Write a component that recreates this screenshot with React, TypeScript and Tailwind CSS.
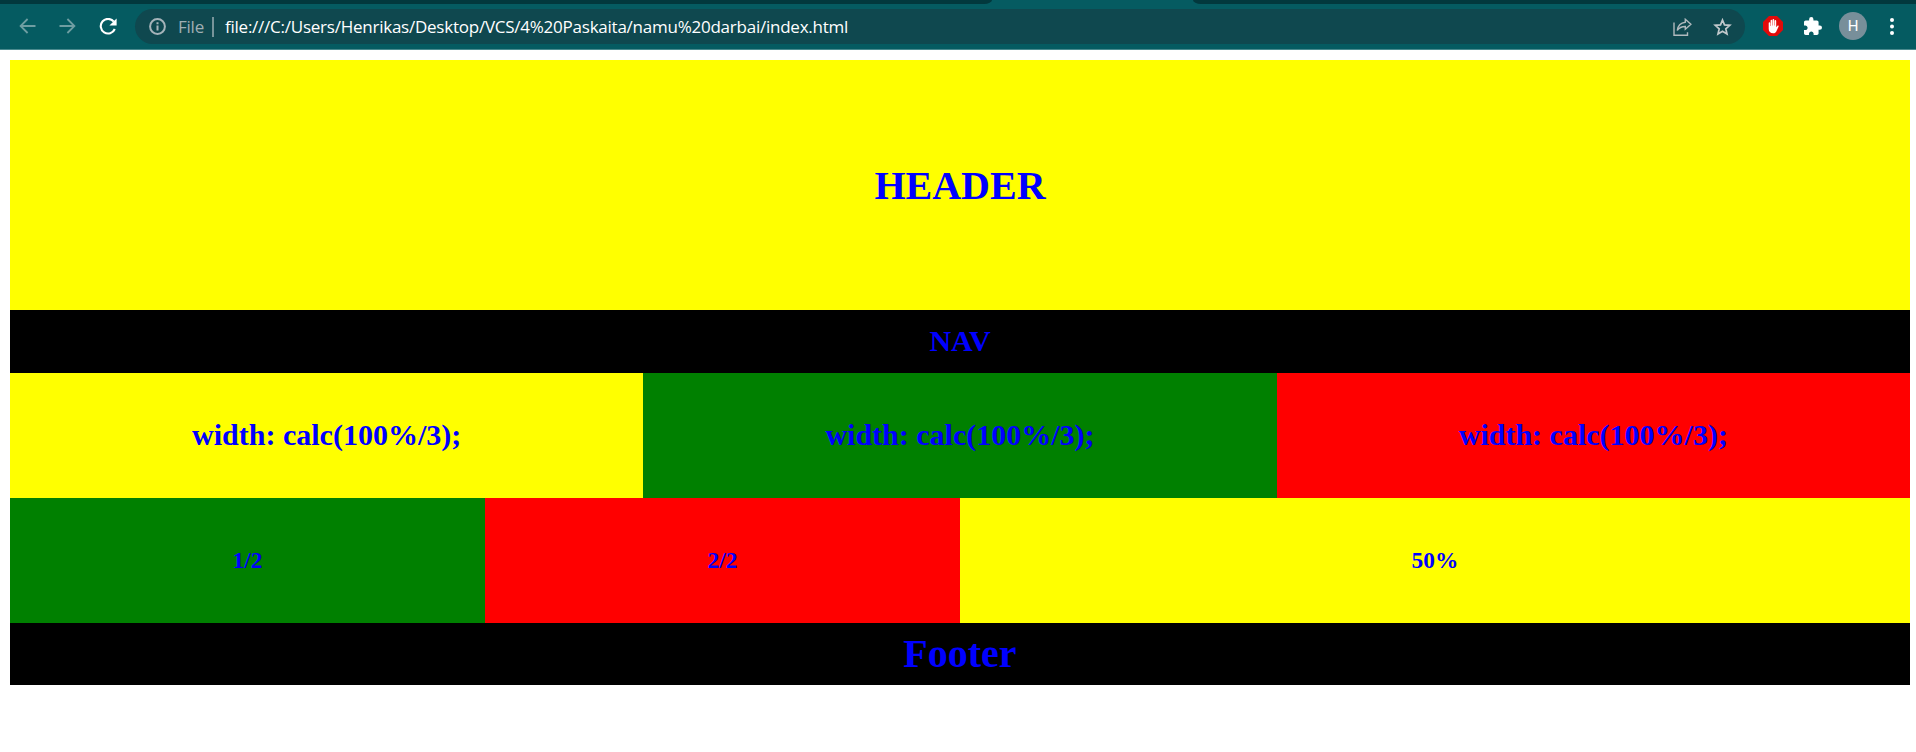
import React from "react";

function TabStrip() {
  return (
    <div className="flex h-1 shrink-0 bg-[#055b61]">
      <div className="h-1 w-[992px] rounded-br-[8px_4px] bg-[#02383d]" />
      <div className="h-1 w-[201px]" />
      <div className="h-1 flex-1 rounded-bl-[8px_4px] bg-[#02383d]" />
    </div>
  );
}

function Toolbar() {
  return (
    <div className="flex h-[46px] shrink-0 items-center border-b border-[#4a8a8e] bg-[#055b61]">
      <svg className="mb-px ml-[19px] h-4 w-[17px] shrink-0" viewBox="0 0 17 16" fill="none" stroke="#6f9ea2" strokeWidth="1.8">
        <path d="M16.5 8H1.8M8.6 1L1.6 8l7 7" />
      </svg>
      <svg className="mb-px ml-[23px] h-4 w-[17px] shrink-0" viewBox="0 0 17 16" fill="none" stroke="#6f9ea2" strokeWidth="1.8">
        <path d="M.5 8h14.7M8.4 1l7 7-7 7" />
      </svg>
      <svg className="mb-px ml-[23px] h-[17px] w-[18px] shrink-0" viewBox="0 0 18 17">
        <path d="M14.8 3.7A7.3 7.3 0 1 0 15.8 11" fill="none" stroke="#fff" strokeWidth="2.1" />
        <path d="M17.6.6v7H10.4z" fill="#fff" />
      </svg>
      <div className="ml-[18px] flex h-[35px] w-[1610px] shrink-0 items-center rounded-full bg-[#0f484f] pl-[14px] font-['Open_Sans',sans-serif] text-[17px] tracking-[-0.24px]">
        <svg className="h-[17px] w-[17px] shrink-0" viewBox="0 0 17 17" fill="none" stroke="#a5b3b9" strokeWidth="2">
          <circle cx="8.5" cy="8.5" r="7.4" />
          <path d="M8.5 7.6v5M8.5 4.2v2" />
        </svg>
        <span className="ml-3 w-[34px] shrink-0 whitespace-nowrap text-[#a0afb4]">File</span>
        <span className="h-5 w-[2px] shrink-0 bg-[#77949a]" />
        <span className="ml-[11px] shrink-0 whitespace-nowrap text-white">
          file:///C:/Users/Henrikas/Desktop/VCS/4%20Paskaita/namu%20darbai/index.html
        </span>
        <svg className="ml-auto h-[18px] w-[19px] shrink-0" viewBox="0 0 19 18" fill="none" stroke="#b0b9bd" strokeWidth="1.4">
          <path d="M1 4.5v12.7h13.5v-3" />
          <path d="M12.3 1.3l5.6 5-5.6 5V8.5C8.5 8.5 6 9.8 4.3 12.5 4.8 8 7.8 4.7 12.3 4.2z" strokeLinejoin="miter" />
        </svg>
        <svg className="ml-[21px] mr-[13px] h-[18px] w-[19px] shrink-0" viewBox="0 0 19 18" fill="none" stroke="#c1c8cb" strokeWidth="1.7">
          <path d="M9.5 2l2 4.9 5.3.4-4 3.5 1.2 5.2-4.5-2.8L5 16l1.2-5.2-4-3.5 5.3-.4z" />
        </svg>
      </div>
      <svg className="mb-px ml-[18px] h-5 w-5 shrink-0" viewBox="0 0 20 20">
        <path d="M6 0h8l6 6v8l-6 6H6l-6-6V6z" fill="#e20a0a" />
        <path d="M5.700 7.100c0-1 1.500-1 1.500 0v3h.4V4.600c0-1.100 1.600-1.100 1.600 0v4.900h.4V3.800c0-1.100 1.600-1.100 1.600 0v5.700h.4V4.900c0-1.100 1.600-1.100 1.600 0v6.300l1.100-1.300c.6-.7 1.700-.1 1.300.7l-2.300 4.800c-.6 1.200-1.500 1.800-3 1.800-3 0-4.600-1.600-4.600-4.500z" fill="#fff" />
      </svg>
      <svg className="mb-px ml-[21px] h-[18px] w-[18px] shrink-0" viewBox="2 1 21 21" fill="#fff">
        <path d="M20.500 11H19V7c0-1.100-.9-2-2-2h-4V3.500a2.500 2.500 0 0 0-5 0V5H4c-1.100 0-1.990.9-1.990 2v3.800H3.500c1.490 0 2.700 1.210 2.700 2.700s-1.210 2.700-2.700 2.700H2V20c0 1.100.9 2 2 2h3.800v-1.500c0-1.490 1.210-2.700 2.700-2.700s2.700 1.210 2.700 2.700V22H17c1.100 0 2-.9 2-2v-4h1.500a2.500 2.500 0 0 0 0-5z" />
      </svg>
      <div className="mb-px ml-[17px] flex h-7 w-7 shrink-0 items-center justify-center rounded-full bg-[#788f9a] font-['Roboto',sans-serif] text-[15px] text-white">
        H
      </div>
      <svg className="mb-px ml-[23px] h-[17px] w-1 shrink-0" viewBox="0 0 4 17" fill="#fff">
        <circle cx="2" cy="2" r="2" />
        <circle cx="2" cy="8.5" r="2" />
        <circle cx="2" cy="15" r="2" />
      </svg>
    </div>
  );
}

export default function App() {
  return (
    <div className="flex h-[752px] w-[1916px] flex-col overflow-hidden bg-white">
      <TabStrip />
      <Toolbar />
      <main className="ml-[10px] mt-[10px] w-[1900px] font-['Liberation_Serif',serif] font-bold text-[#0000ff]">
        <header className="flex h-[250px] items-center justify-center bg-[#ffff00] pt-[2px]">
          <h1 className="text-[40px] leading-[46px]">HEADER</h1>
        </header>
        <nav className="flex h-[63px] items-center justify-center bg-black pb-[2px]">
          <h2 className="text-[30px] leading-[34px]">NAV</h2>
        </nav>
        <section className="grid h-[125px] grid-cols-3 text-[30px] leading-[34px]">
          <h2 className="flex items-center justify-center bg-[#ffff00] pb-[2px]">width: calc(100%/3);</h2>
          <h2 className="flex items-center justify-center bg-[#008000] pb-[2px]">width: calc(100%/3);</h2>
          <h2 className="flex items-center justify-center bg-[#ff0000] pb-[2px]">width: calc(100%/3);</h2>
        </section>
        <section className="grid h-[125px] grid-cols-4 text-[23.4px] leading-[27px]">
          <h3 className="flex items-center justify-center bg-[#008000]">1/2</h3>
          <h3 className="flex items-center justify-center bg-[#ff0000]">2/2</h3>
          <h3 className="col-span-2 flex items-center justify-center bg-[#ffff00]">50%</h3>
        </section>
        <footer className="flex h-[62px] items-center justify-center bg-black">
          <h1 className="text-[40px] leading-[46px]">Footer</h1>
        </footer>
      </main>
    </div>
  );
}
